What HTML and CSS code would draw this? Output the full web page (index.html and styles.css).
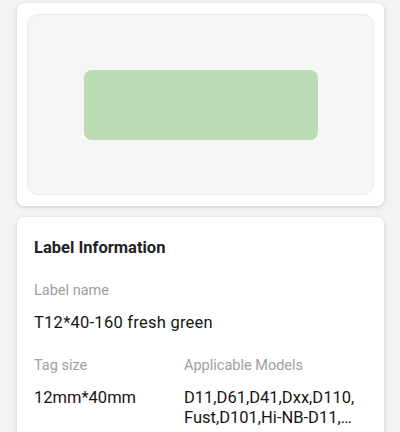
FILE: index.html
```html
<!DOCTYPE html>
<html>
<head>
<meta charset="utf-8">
<link rel="stylesheet" href="styles.css">
</head>
<body>
<div class="page">
  <section class="card preview-card">
    <div class="preview">
      <div class="label-shape"></div>
    </div>
  </section>
  <section class="card info-card">
    <h2 class="title">Label Information</h2>
    <div class="field">
      <div class="key">Label name</div>
      <div class="value name">T12*40-160 fresh green</div>
    </div>
    <div class="row">
      <div class="field">
        <div class="key">Tag size</div>
        <div class="value">12mm*40mm</div>
      </div>
      <div class="field">
        <div class="key">Applicable Models</div>
        <div class="value models">D11,D61,D41,Dxx,D110,<wbr>Fust,D101,Hi-NB-D11,…</div>
      </div>
    </div>
  </section>
</div>
</body>
</html>
```

FILE: styles.css
```css
html, body {
  margin: 0;
  padding: 0;
  background: #f3f3f3;
  font-family: Roboto, "Noto Sans", sans-serif;
}
.page {
  padding: 3px 16px 0 17px;
  display: flex;
  flex-direction: column;
  gap: 11px;
}
.card {
  background: #ffffff;
  border-radius: 7px;
  box-shadow: 0 1px 4px rgba(0, 0, 0, 0.16);
}
.preview-card {
  padding: 11px 10px;
}
.preview {
  height: 179px;
  background: #f6f6f6;
  border: 1px solid #ebebeb;
  border-radius: 11px;
  display: flex;
  align-items: center;
  justify-content: center;
}
.label-shape {
  width: 234px;
  height: 70px;
  background: #bbdbb4;
  border-radius: 8px;
}
.info-card {
  padding: 21px 18px 20px 17px;
}
.title {
  margin: 0;
  font-size: 16.5px;
  line-height: 20px;
  font-weight: 700;
  color: #222222;
}
.field .key {
  font-size: 14.5px;
  line-height: 20px;
  color: #a0a0a0;
}
.field .value {
  font-size: 16.5px;
  line-height: 19.5px;
  color: #151515;
}
.value.name {
  letter-spacing: 0.25px;
}
.info-card > .field {
  margin-top: 22.5px;
}
.info-card .field .value {
  margin-top: 12px;
}
.row {
  margin-top: 24px;
  display: grid;
  grid-template-columns: 150px 1fr;
}
.models {
  display: -webkit-box;
  -webkit-line-clamp: 2;
  -webkit-box-orient: vertical;
  overflow: hidden;
}
```
